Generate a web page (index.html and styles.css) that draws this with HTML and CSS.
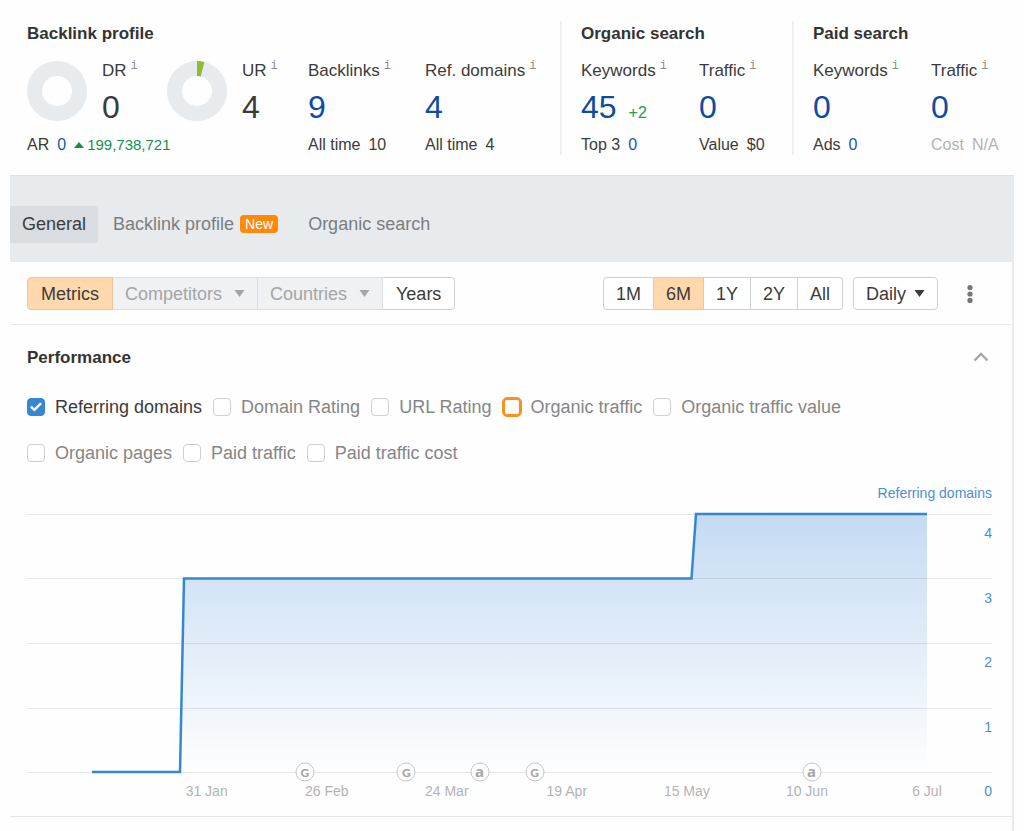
FILE: index.html
```html
<!DOCTYPE html>
<html lang="en">
<head>
<meta charset="utf-8">
<title>Site overview</title>
<meta name="viewport" content="width=device-width, initial-scale=1">
<link rel="stylesheet" href="styles.css">
</head>
<body>
<div class="page">
  <header class="summary">
    <section class="group group-backlinks">
      <h2 class="title">Backlink profile</h2>
      <div class="stats">
        <div class="stat gauge">
          <svg class="donut" viewBox="0 0 60 60" aria-hidden="true"><circle cx="30" cy="30" r="22.5" fill="none" stroke="#e7ebee" stroke-width="15"/></svg>
          <div><div class="label">DR<span class="info">i</span></div><div class="value">0</div></div>
        </div>
        <div class="stat gauge">
          <svg class="donut" viewBox="0 0 60 60" aria-hidden="true"><circle cx="30" cy="30" r="22.5" fill="none" stroke="#e7ebee" stroke-width="15"/><path d="M30 0A30 30 0 0 1 37.4 1L33.8 15.4A15 15 0 0 0 30 15Z" fill="#8fbc34"/></svg>
          <div><div class="label">UR<span class="info">i</span></div><div class="value">4</div></div>
        </div>
        <div class="stat"><div class="label">Backlinks<span class="info">i</span></div><a class="value" href="#">9</a></div>
        <div class="stat"><div class="label">Ref. domains<span class="info">i</span></div><a class="value" href="#">4</a></div>
        <div class="sub rank"><span>AR</span><a href="#">0</a><span class="gain"><svg class="up" viewBox="0 0 10 6" aria-hidden="true"><path d="M0 6L5 0L10 6Z" fill="currentColor"/></svg>199,738,721</span></div>
        <div class="sub"><span>All time</span><span>10</span></div>
        <div class="sub"><span>All time</span><span>4</span></div>
      </div>
    </section>
    <section class="group group-organic">
      <h2 class="title">Organic search</h2>
      <div class="stats">
        <div class="stat"><div class="label">Keywords<span class="info">i</span></div><div class="row"><a class="value" href="#">45</a><span class="delta">+2</span></div></div>
        <div class="stat"><div class="label">Traffic<span class="info">i</span></div><a class="value" href="#">0</a></div>
        <div class="sub"><span>Top 3</span><a href="#">0</a></div>
        <div class="sub"><span>Value</span><span>$0</span></div>
      </div>
    </section>
    <section class="group group-paid">
      <h2 class="title">Paid search</h2>
      <div class="stats">
        <div class="stat"><div class="label">Keywords<span class="info">i</span></div><a class="value" href="#">0</a></div>
        <div class="stat"><div class="label">Traffic<span class="info">i</span></div><a class="value" href="#">0</a></div>
        <div class="sub"><span>Ads</span><a href="#">0</a></div>
        <div class="sub muted"><span>Cost</span><span>N/A</span></div>
      </div>
    </section>
  </header>

  <nav class="tabs">
    <a class="tab active" href="#">General</a>
    <a class="tab" href="#">Backlink profile<span class="badge">New</span></a>
    <a class="tab" href="#">Organic search</a>
  </nav>

  <main class="content">
    <div class="toolbar">
      <div class="segments">
        <button class="segment on" type="button">Metrics</button>
        <div class="segment pick off">
          <select aria-label="Competitors" disabled><option>Competitors</option></select>
          <svg class="caret" viewBox="0 0 10 7" aria-hidden="true"><path d="M0 0H10L5 7Z" fill="currentColor"/></svg>
        </div>
        <div class="segment pick off">
          <select aria-label="Countries" disabled><option>Countries</option></select>
          <svg class="caret" viewBox="0 0 10 7" aria-hidden="true"><path d="M0 0H10L5 7Z" fill="currentColor"/></svg>
        </div>
        <button class="segment" type="button">Years</button>
      </div>
      <div class="range">
        <div class="segments compact">
          <button class="segment" type="button">1M</button>
          <button class="segment on" type="button">6M</button>
          <button class="segment" type="button">1Y</button>
          <button class="segment" type="button">2Y</button>
          <button class="segment" type="button">All</button>
        </div>
        <div class="segments">
          <div class="segment pick daily">
            <select aria-label="Interval"><option>Daily</option></select>
            <svg class="caret" viewBox="0 0 10 7" aria-hidden="true"><path d="M0 0H10L5 7Z" fill="currentColor"/></svg>
          </div>
        </div>
        <button class="icon more" type="button" aria-label="More"><svg width="6" height="18" viewBox="0 0 6 18"><g fill="#757575"><circle cx="3" cy="2.6" r="2.6"/><circle cx="3" cy="9" r="2.6"/><circle cx="3" cy="15.4" r="2.6"/></g></svg></button>
      </div>
    </div>

    <section class="panel">
      <div class="panel-head">
        <h2 class="title">Performance</h2>
        <button class="icon fold" type="button" aria-label="Collapse"><svg width="16" height="10" viewBox="0 0 16 10"><path d="M1.5 8.5L8 2L14.500 8.500" fill="none" stroke="#a6a6a6" stroke-width="2.400"/></svg></button>
      </div>
      <div class="metrics">
        <div class="checks">
          <label class="check"><input type="checkbox" checked>Referring domains</label>
          <label class="check"><input type="checkbox">Domain Rating</label>
          <label class="check"><input type="checkbox">URL Rating</label>
          <label class="check"><input class="organic" type="checkbox">Organic traffic</label>
          <label class="check"><input type="checkbox">Organic traffic value</label>
        </div>
        <div class="checks">
          <label class="check"><input type="checkbox">Organic pages</label>
          <label class="check"><input type="checkbox">Paid traffic</label>
          <label class="check"><input type="checkbox">Paid traffic cost</label>
        </div>
      </div>
      <div class="chart">
        <div class="series">Referring domains</div>
        <div class="plot">
          <svg class="lines" viewBox="0 0 965 258" preserveAspectRatio="none" aria-hidden="true">
            <defs><linearGradient id="fade" x1="0" y1="0" x2="0" y2="1"><stop offset="0" stop-color="#3080d6" stop-opacity=".28"/><stop offset="1" stop-color="#3080d6" stop-opacity="0"/></linearGradient></defs>
            <path d="M65 258H153L157 64.500H664.500L669 0H900V258Z" fill="url(#fade)"/>
            <path d="M0 .5H965M0 64.500H965M0 129.500H965M0 194.500H965M0 258.500H965" stroke="#000" stroke-opacity=".09" fill="none"/>
            <path d="M65 258H153L157 64.500H664.500L669 0H900" fill="none" stroke="#3686d2" stroke-width="2.500"/>
          </svg>
          <div class="scale"><span>4</span><span>3</span><span>2</span><span>1</span></div>
          <span class="marker" style="left:28.8%">G</span>
          <span class="marker" style="left:39.3%">G</span>
          <span class="marker round" style="left:46.9%">a</span>
          <span class="marker" style="left:52.6%">G</span>
          <span class="marker round" style="left:81.3%">a</span>
        </div>
        <div class="dates"><span>31 Jan</span><span>26 Feb</span><span>24 Mar</span><span>19 Apr</span><span>15 May</span><span>10 Jun</span><span>6 Jul</span><span class="zero">0</span></div>
      </div>
    </section>
  </main>
</div>
</body>
</html>
```
FILE: styles.css
```css
* { box-sizing: border-box; }
body {
  margin: 0;
  background: #fefefe;
  color: #3b3b3b;
  font: 18px/24px "Liberation Sans", Arial, sans-serif;
}
a { color: #0f4c9f; text-decoration: none; }
.page {
  display: flex;
  flex-direction: column;
  min-height: 100vh;
  padding: 0 10px;
}
.title { margin: 0; font-size: 17px; line-height: 25px; color: #333; }

.summary {
  display: grid;
  grid-template-columns: 533fr 232fr 222fr;
  padding: 21px 0 20px 17px;
}
.group + .group { border-left: 2px solid #eef0f1; padding-left: 19px; }
.stats {
  display: grid;
  row-gap: 11px;
  margin-top: 14px;
  white-space: nowrap;
}
.group-backlinks .stats { grid-template-columns: 140fr 141fr 117fr 135fr; }
.group-organic .stats { grid-template-columns: 118fr 93fr; }
.group-paid .stats { grid-template-columns: 118fr 83fr; }
.gauge { display: flex; gap: 15px; }
.donut { width: 60px; height: 60px; margin-top: 1px; }
.label { display: flex; gap: 4px; font-size: 17px; line-height: 22px; }
.info { font: 12px/12px "Liberation Mono", monospace; color: #8c8c8c; }
.value { display: block; margin-top: 8px; font-size: 32px; line-height: 34px; }
.row { display: flex; align-items: baseline; gap: 12px; }
.delta { color: #259a50; font-size: 16px; line-height: 16px; }
.sub { display: flex; gap: 8px; font-size: 16px; line-height: 20px; }
.sub a { color: #1b57ab; }
.rank { grid-column: span 2; }
.gain {
  display: flex;
  align-items: center;
  gap: 3px;
  color: #15904b;
  font-size: 15px;
}
.up { width: 10px; height: 6px; }
.muted { color: #b3b3b3; }

.tabs {
  display: flex;
  align-items: center;
  height: 87px;
  padding-top: 10px;
  border-top: 1px solid #dfe1e4;
  background: #e7ebee;
}
.tab {
  display: flex;
  align-items: center;
  height: 37px;
  padding: 0 15px;
  color: #7b7e80;
}
.tab.active {
  padding: 0 12px;
  border-radius: 0 4px 4px 0;
  background: #d9dde2;
  color: #3b3b3b;
}
.badge {
  margin-left: 6px;
  padding: 0 5px;
  border-radius: 4px;
  background: #ff8a0a;
  color: #fff;
  font-size: 14px;
  line-height: 18px;
}

.content { flex: 1; border-right: 2px solid #e7ebee; }
.toolbar {
  display: flex;
  justify-content: space-between;
  padding: 15px 27px 14px 17px;
  border-bottom: 1px solid #e6e8ea;
}
.segments { display: flex; }
.segment {
  height: 33px;
  padding: 0 13px;
  border: 1px solid #cfd2d4;
  border-left-width: 0;
  background: #fff;
  color: #3b3b3b;
  font: inherit;
}
.compact .segment { padding: 0 12px; }
.segment:first-child { border-left-width: 1px; border-radius: 4px 0 0 4px; }
.segment:last-child { border-radius: 0 4px 4px 0; }
.segment:only-child { border-radius: 4px; }
.segment.on { background: #ffd8ae; border-color: #eac59c; }
.segment.off { background: #eff1f3; border-color: #dcdfe1; color: #a3a5a7; }
.segment.pick { position: relative; padding: 0; }
.pick select {
  height: 100%;
  padding: 0 34px 0 12px;
  border: 0;
  appearance: none;
  background: none;
  color: inherit;
  font: inherit;
  opacity: 1;
}
.pick.daily select { padding-right: 30px; }
.caret {
  position: absolute;
  top: 12px;
  right: 12px;
  width: 11px;
  height: 7px;
  pointer-events: none;
}
.range { display: flex; align-items: center; gap: 10px; }
.icon {
  display: flex;
  align-items: center;
  justify-content: center;
  padding: 0;
  border: 0;
  background: none;
}
.more { width: 30px; height: 30px; margin-left: 7px; }

.panel { padding: 20px 20px 17px 17px; border-bottom: 1px solid #e3e5e6; }
.panel-head { display: flex; justify-content: space-between; margin-bottom: 25px; }
.fold { width: 22px; height: 24px; }
.metrics { display: grid; gap: 22px; margin-bottom: 20px; }
.checks {
  display: flex;
  flex-wrap: wrap;
  gap: 11px;
  color: #868686;
}
.check { display: flex; align-items: center; gap: 10px; }
.check input {
  display: flex;
  align-items: center;
  justify-content: center;
  width: 18px;
  height: 18px;
  margin: 0;
  border: 1px solid #cfcfcf;
  border-radius: 4px;
  appearance: none;
  background: #fff;
}
.check input:checked { border-color: #3686d2; background: #3686d2; }
.check input:checked::before {
  content: "";
  width: 12px;
  height: 10px;
  background: #fff;
  clip-path: polygon(0 55%, 15% 38%, 36% 63%, 85% 4%, 100% 20%, 37% 96%);
}
.check:has(input:checked) { color: #3b3b3b; }
.check .organic { outline: 1px solid #f7901e; border: 2px solid #f7901e; }

.chart { color: #b3b3b3; font-size: 14px; line-height: 16px; }
.series { margin-bottom: 13px; color: #4a90d2; text-align: right; }
.plot { position: relative; height: 258px; }
.lines { display: block; width: 100%; height: 100%; overflow: visible; }
.scale {
  position: absolute;
  inset: 0 0 0 auto;
  display: grid;
  grid-template-rows: repeat(4, 1fr);
  color: #4a90d2;
}
.scale span { padding-top: 11px; }
.marker {
  position: absolute;
  top: 100%;
  width: 19px;
  height: 19px;
  border: 1px solid #c6c6c6;
  border-radius: 50%;
  background: #fff;
  color: #a6a6a6;
  font: 900 12px/17px Lato, sans-serif;
  text-align: center;
  transform: translate(-50%, -50%);
}
.marker.round { font: bold 15px/15px "Noto Sans", sans-serif; }
.dates {
  display: grid;
  grid-template-columns: repeat(7, minmax(0, 120fr)) minmax(0, 5fr);
  margin-top: 11px;
  padding-left: 12.4%;
  text-align: center;
}
.zero { justify-self: end; color: #4a90d2; }
```
